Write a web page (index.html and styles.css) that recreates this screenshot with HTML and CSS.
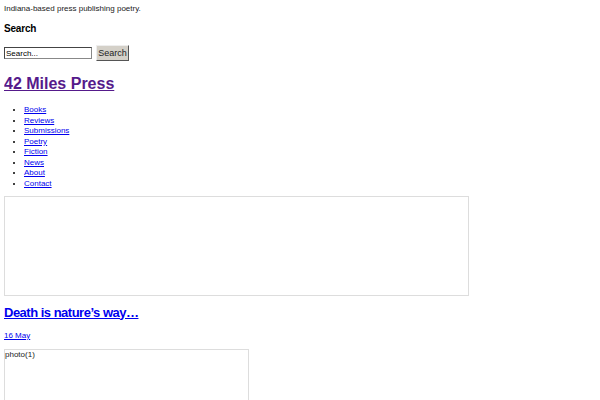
FILE: index.html
```html
<!DOCTYPE html>
<html lang="en">
<head>
  <meta charset="UTF-8">
  <title>42 Miles Press</title>
  <link rel="stylesheet" href="styles.css">
</head>
<body>

  <p class="tagline">Indiana-based press publishing poetry.</p>

  <h2 class="widget-title">Search</h2>
  <form class="search-form" action="#" method="get">
    <input type="text" class="search-field" value="Search...">
    <button type="submit" class="search-button">Search</button>
  </form>

  <h1 class="site-title"><a href="#" class="visited">42 Miles Press</a></h1>

  <ul class="main-nav">
    <li><a href="#">Books</a></li>
    <li><a href="#">Reviews</a></li>
    <li><a href="#">Submissions</a></li>
    <li><a href="#">Poetry</a></li>
    <li><a href="#">Fiction</a></li>
    <li><a href="#">News</a></li>
    <li><a href="#">About</a></li>
    <li><a href="#">Contact</a></li>
  </ul>

  <div class="banner"></div>

  <div class="post">
    <h2 class="post-title"><a href="#">Death is nature’s way…</a></h2>
    <p class="post-date"><a href="#">16 May</a></p>
    <div class="post-photo">photo(1)</div>
  </div>

</body>
</html>
```

FILE: styles.css
```css
body {
  font-family: "Liberation Sans", Arial, sans-serif;
  font-size: 8px;
  color: #000;
  background-color: #fff;
  margin: 4px;
}

a {
  color: #0000ee;
}

a.visited {
  color: #551a8b;
}

.tagline {
  margin: 0 0 9px 0;
  line-height: 10px;
  color: #222;
}

.widget-title {
  font-size: 10px;
  line-height: 12px;
  letter-spacing: -0.2px;
  margin: 0 0 10px 0;
}

.search-form {
  display: flex;
  align-items: center;
  gap: 4px;
  height: 16px;
  margin-bottom: 14px;
}

.search-field {
  box-sizing: border-box;
  width: 88px;
  height: 12px;
  padding: 0 1px;
  border: 1px solid #888;
  border-top-color: #444;
  border-left-color: #444;
  font-family: inherit;
  font-size: 8px;
}

.search-button {
  box-sizing: border-box;
  width: 33px;
  height: 16px;
  padding: 0;
  background-color: #d4d0c8;
  border: 1px solid #eee;
  border-right-color: #555;
  border-bottom-color: #555;
  font-family: inherit;
  font-size: 9px;
  color: #222;
}

.site-title {
  font-size: 16px;
  line-height: 18px;
  margin: 0 0 12px 0;
}

.main-nav {
  margin: 0 0 6px 0;
  padding-left: 20px;
  line-height: 10.57px;
}

.banner {
  height: 98px;
  width: 463px;
  border: 1px solid #ddd;
  margin-bottom: 9px;
}

.post-title {
  font-size: 13px;
  line-height: 16px;
  letter-spacing: -0.5px;
  margin: 0 0 10px 0;
}

.post-date {
  margin: 0 0 8px 0;
  line-height: 10px;
}

.post-photo {
  width: 243px;
  height: 60px;
  border: 1px solid #ddd;
  color: #222;
  line-height: 9px;
}
```
